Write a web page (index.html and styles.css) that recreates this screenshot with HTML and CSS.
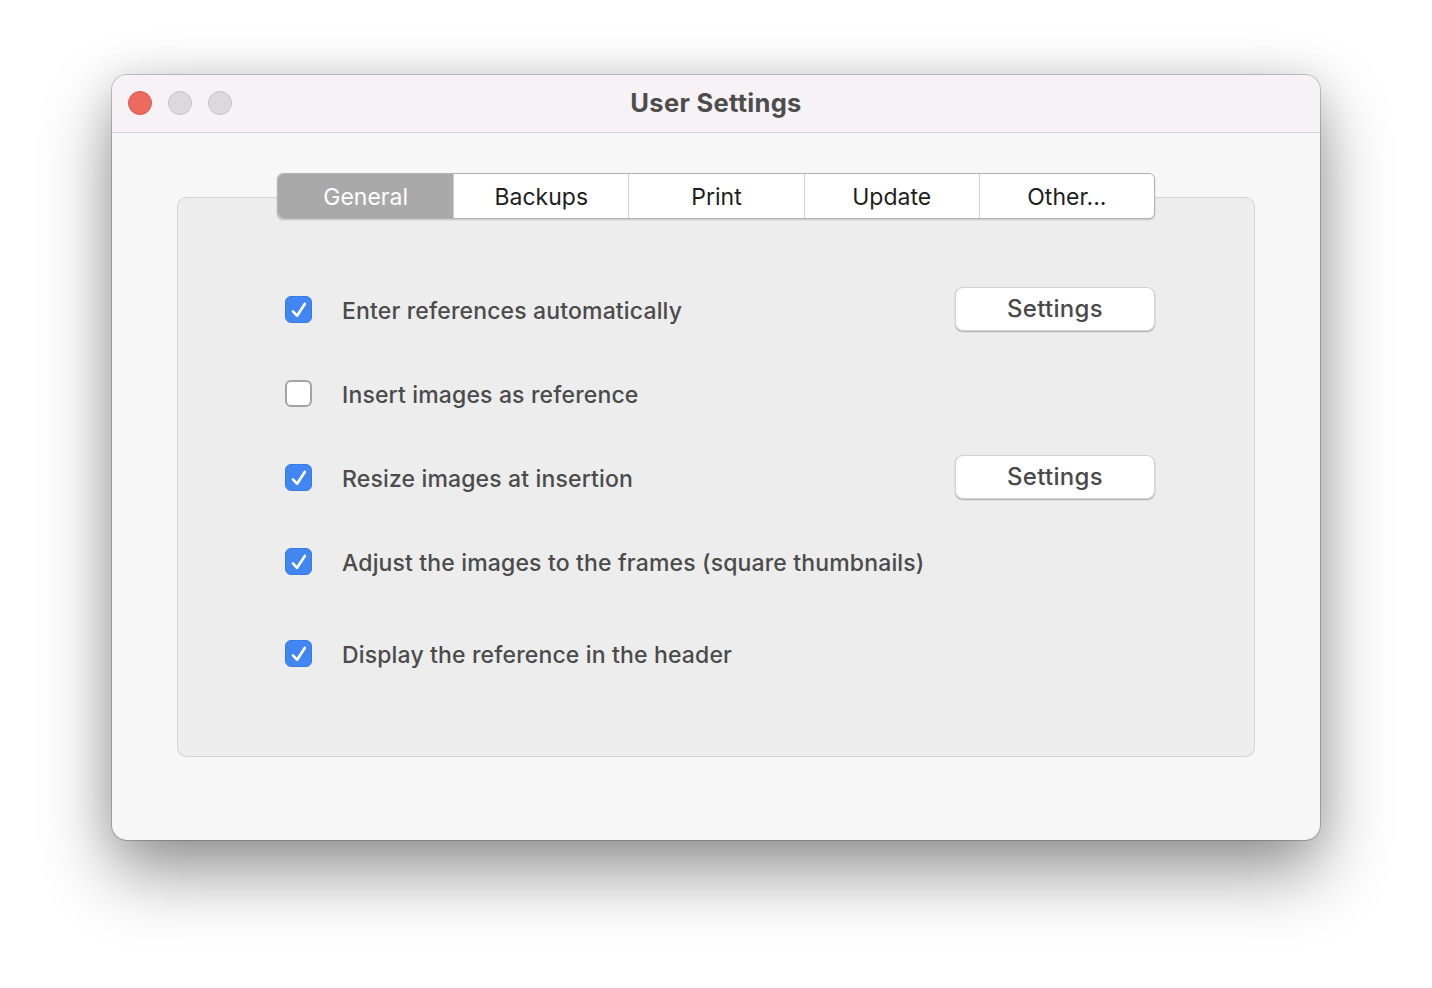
FILE: index.html
```html
<!DOCTYPE html>
<html lang="en">
<head>
<meta charset="utf-8">
<title>User Settings</title>
<link rel="stylesheet" href="styles.css">
</head>
<body>
<div class="window">
  <header class="titlebar">
    <div class="lights">
      <span class="light close"></span>
      <span class="light"></span>
      <span class="light"></span>
    </div>
    <div class="title">User Settings</div>
    <div></div>
  </header>
  <main class="content">
    <section class="group">
      <nav class="tabs">
        <div class="tab active">General</div>
        <div class="tab">Backups</div>
        <div class="tab">Print</div>
        <div class="tab">Update</div>
        <div class="tab">Other...</div>
      </nav>
      <div class="rows">
        <div class="row">
          <span class="check on"><svg viewBox="0 0 27 27"><polyline points="7.5,15.5 12,20.3 20.3,7.5"/></svg></span>
          <span class="label">Enter references automatically</span>
          <button class="btn">Settings</button>
        </div>
        <div class="row">
          <span class="check"></span>
          <span class="label">Insert images as reference</span>
        </div>
        <div class="row">
          <span class="check on"><svg viewBox="0 0 27 27"><polyline points="7.5,15.5 12,20.3 20.3,7.5"/></svg></span>
          <span class="label">Resize images at insertion</span>
          <button class="btn">Settings</button>
        </div>
        <div class="row">
          <span class="check on"><svg viewBox="0 0 27 27"><polyline points="7.5,15.5 12,20.3 20.3,7.5"/></svg></span>
          <span class="label">Adjust the images to the frames (square thumbnails)</span>
        </div>
        <div class="row last">
          <span class="check on"><svg viewBox="0 0 27 27"><polyline points="7.5,15.5 12,20.3 20.3,7.5"/></svg></span>
          <span class="label">Display the reference in the header</span>
        </div>
      </div>
    </section>
  </main>
</div>
</body>
</html>
```

FILE: styles.css
```css
* { box-sizing: border-box; }
html, body { margin: 0; padding: 0; }
body {
  background: #ffffff;
  font-family: Inter, "Noto Sans", "Liberation Sans", sans-serif;
  padding-top: 75px;
  height: 988px;
  overflow: hidden;
}
.window {
  width: 1208px;
  height: 765px;
  margin: 0 auto;
  border-radius: 15px;
  background: #f7f7f7;
  box-shadow: 0 0 0 1px rgba(0,0,0,0.2), 0 32px 70px rgba(0,0,0,0.42), 0 0 40px rgba(0,0,0,0.10);
  overflow: hidden;
  display: flex;
  flex-direction: column;
}
.titlebar {
  height: 58px;
  flex: none;
  background: #f6f2f5;
  border-bottom: 1px solid #d4d0d3;
  display: grid;
  grid-template-columns: 1fr auto 1fr;
  align-items: center;
}
.lights {
  display: flex;
  gap: 16px;
  padding-left: 16px;
  padding-bottom: 1px;
}
.light {
  width: 24px;
  height: 24px;
  border-radius: 50%;
  background: #dcd8dc;
  border: 1px solid #c6c2c6;
}
.light.close {
  background: #ec6a5e;
  border-color: #d55a4f;
}
.title {
  font-size: 25.5px;
  font-weight: 700;
  color: #4d4d4d;
  letter-spacing: 0.3px;
  padding-bottom: 2px;
}
.content {
  flex: 1;
  padding: 64px 65px 83px;
}
.group {
  height: 100%;
  background: #ededed;
  border: 1px solid #d3d3d3;
  border-radius: 9px;
  padding: 0 99px;
}
.tabs {
  display: grid;
  grid-template-columns: repeat(5, 1fr);
  height: 46px;
  margin-top: -25px;
  background: #ffffff;
  border: 1px solid #b3b3b3;
  border-radius: 6px;
  box-shadow: 0 1px 2px rgba(0,0,0,0.18);
  overflow: hidden;
}
.tab {
  display: flex;
  align-items: center;
  justify-content: center;
  font-size: 23px;
  color: #1e1e1e;
  border-left: 1px solid #cfcfcf;
  letter-spacing: 0;
  padding-top: 1px;
}
.tab:first-child { border-left: none; }
.tab.active {
  background: #a9a9a9;
  color: #ffffff;
}
.rows {
  display: flex;
  flex-direction: column;
  gap: 40px;
  padding-top: 68px;
}
.row {
  height: 44px;
  display: flex;
  align-items: center;
  padding-left: 8px;
}
.row.last { margin-top: 8px; }
.check {
  width: 27px;
  height: 27px;
  flex: none;
  border-radius: 6px;
  background: #ffffff;
  border: 2px solid #a3a3a3;
  display: flex;
}
.check.on {
  background: #4186f1;
  border: 1px solid #3b7be0;
}
.check svg {
  width: 100%;
  height: 100%;
}
.check polyline {
  fill: none;
  stroke: #ffffff;
  stroke-width: 2.8;
  stroke-linecap: round;
  stroke-linejoin: round;
}
.label {
  margin-left: 30px;
  padding-top: 4px;
  font-size: 23px;
  font-weight: 500;
  color: #4b4b4b;
  letter-spacing: 0.15px;
  flex: 1;
}
.btn {
  width: 200px;
  height: 44px;
  flex: none;
  background: #ffffff;
  border: 1px solid #d2d2d2;
  border-radius: 8px;
  box-shadow: 0 1px 1.5px rgba(0,0,0,0.28);
  font-family: inherit;
  font-size: 24px;
  font-weight: 500;
  color: #4a4a4a;
  letter-spacing: 0.3px;
  padding: 0 0 2px;
}
```
